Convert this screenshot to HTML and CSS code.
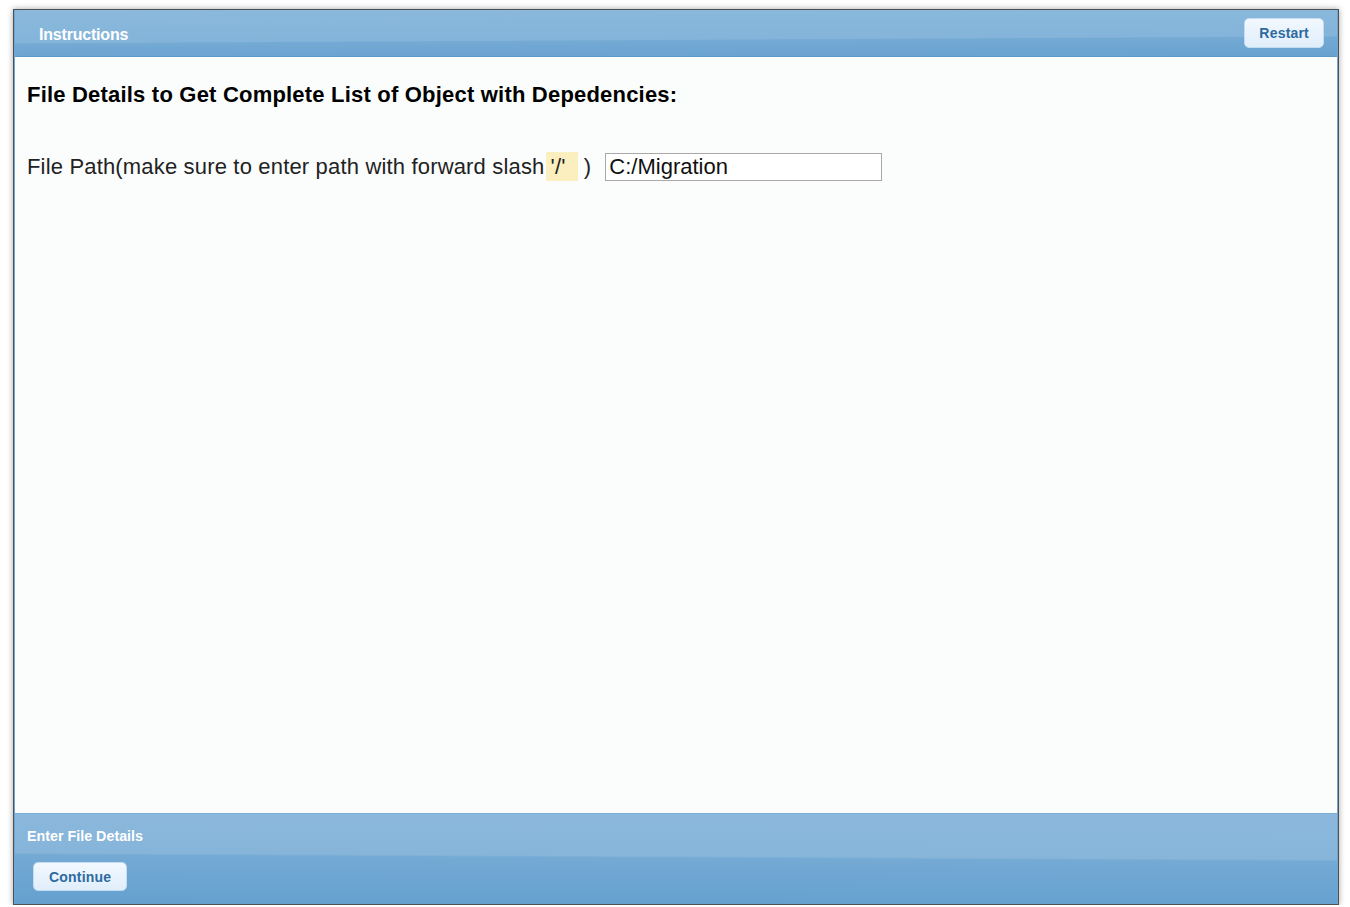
FILE: index.html
```html
<!DOCTYPE html>
<html lang="en">
<head>
  <meta charset="UTF-8" />
  <title>Enter File Details</title>
  <link rel="stylesheet" href="styles.css">
</head>
<body>
  <div class="window">
    <div class="inner">
      <div class="topbar">
        <span class="topbar-title">Instructions</span>
        <button class="btn">Restart</button>
      </div>
      <div class="content">
        <h2>File Details to Get Complete List of Object with Depedencies:</h2>
        <div class="field">
          <label for="path">File Path(make sure to enter path with forward slash<span class="hl">'/'</span> )</label>
          <input type="text" id="path" value="C:/Migration" />
        </div>
      </div>
      <div class="bottombar">
        <div class="bottombar-title">Enter File Details</div>
        <button class="btn btn-continue">Continue</button>
      </div>
    </div>
  </div>
</body>
</html>
```

FILE: styles.css
```css
body {
  margin: 0;
  padding: 9px 0 0 13px;
  background: #fff;
  font-family: "Liberation Sans", Arial, sans-serif;
}
.window {
  width: 1324px;
  height: 894px;
  border: 1px solid #505050;
  box-shadow: 0 0 6px rgba(0, 0, 0, 0.35);
}
.inner {
  height: 100%;
  display: flex;
  flex-direction: column;
  border-left: 1px solid #6ea5d2;
  border-right: 1px solid #6ea5d2;
  box-sizing: border-box;
}
.topbar {
  height: 46px;
  display: flex;
  align-items: center;
  justify-content: space-between;
  padding: 0 13px 0 24px;
  background: linear-gradient(179.7deg, #8ab9dd 0%, #85b4da 62%, #74aad4 64%, #68a2cf 100%);
  border-bottom: 1px solid #5d98c9;
}
.topbar-title {
  color: #fff;
  font-weight: bold;
  font-size: 16px;
  margin-top: 3px;
  letter-spacing: -0.2px;
}
.btn {
  font-family: "Liberation Sans", Arial, sans-serif;
  font-weight: bold;
  font-size: 14px;
  letter-spacing: 0.2px;
  color: #2d6aa0;
  background: linear-gradient(#f2f8fe, #e0eefb);
  border: 1px solid #c4dcf0;
  border-radius: 5px;
  padding: 0 14px;
  height: 30px;
  cursor: pointer;
}
.content {
  flex: 1;
  background: #fbfdfd;
  padding: 25px 12px 0;
}
h2 {
  margin: 0 0 45px;
  font-size: 22px;
  font-weight: bold;
  color: #000;
  letter-spacing: 0.2px;
}
.field {
  display: flex;
  align-items: center;
  font-size: 22px;
  letter-spacing: 0.17px;
  color: #222;
}
.hl {
  background: #fcefbf;
  padding: 2px 12px 2px 5px;
  margin-left: 1px;
}
.field input {
  margin-left: 14px;
  width: 277px;
  height: 28px;
  box-sizing: border-box;
  border: 1px solid #a9a9a9;
  font-family: "Liberation Sans", Arial, sans-serif;
  font-size: 22px;
  padding: 0 3px;
  color: #111;
  background: #fff;
}
.bottombar {
  height: 91px;
  box-sizing: border-box;
  padding: 14px 12px 0;
  background: linear-gradient(180.3deg, #8bb7dc 0%, #87b5da 47%, #74aad4 49%, #64a0cf 100%);
  border-top: 1px solid #7aaed6;
}
.bottombar-title {
  color: #fff;
  font-weight: bold;
  font-size: 14.3px;
  margin-bottom: 18px;
}
.btn-continue {
  margin-left: 6px;
  padding: 0 15px;
  height: 29px;
}
```
